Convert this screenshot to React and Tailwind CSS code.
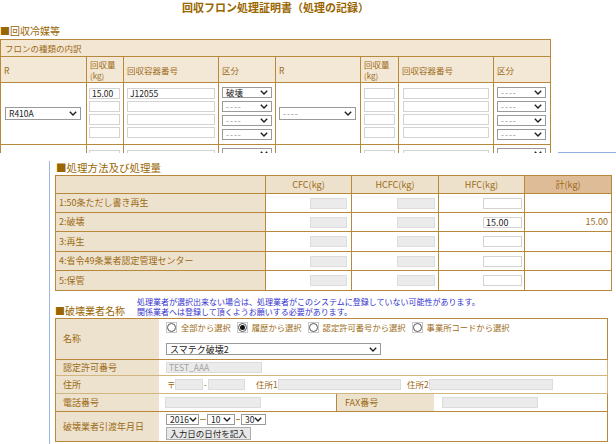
import clsx from 'clsx'

// 回収フロン処理証明書 — top of the record page with the "processing" panel laid over it

function Chevron() {
  return (
    <svg width="8" height="5" viewBox="0 0 8 5" className="shrink-0">
      <path d="M0.8 0.8 L4 4 L7.2 0.8" fill="none" stroke="#1f1f1f" strokeWidth="1.4" />
    </svg>
  )
}

function Sel({ value, muted, className }) {
  return (
    <div
      className={clsx(
        'flex items-center justify-between border border-[#9a9a9a] bg-white pl-[3px] pr-[3px] leading-none',
        className,
      )}
    >
      <span className={muted ? 'tracking-[1px] text-[#8a8a8a]' : 'text-[#222]'}>{value}</span>
      <Chevron />
    </div>
  )
}

function Box({ value, disabled, className }) {
  return (
    <div
      className={clsx(
        'flex items-center border px-[2px] leading-none',
        disabled ? 'bg-[#ebebeb] border-[#dcdcdc] text-[#a0a0a0]' : 'bg-white border-[#d3d3d3] text-[#222]',
        className,
      )}
    >
      {value}
    </div>
  )
}

function Radio({ checked, label }) {
  return (
    <div className="flex items-center gap-[4px]">
      <span className="flex h-[11px] w-[11px] items-center justify-center border border-[#c8c8c8] bg-white">
        <span className="flex h-[9px] w-[9px] items-center justify-center rounded-full border border-[#555] bg-white">
          {checked && <span className="block h-[5px] w-[5px] rounded-full bg-[#111]" />}
        </span>
      </span>
      <span>{label}</span>
    </div>
  )
}

const cellB = 'border-r border-b border-[#b8893b]'

function DataRow({ first }) {
  // one 8-column data row of the recovered-refrigerant table
  const qty = (w, pl, vals) => (
    <div className={clsx(cellB, 'flex flex-col gap-[2px] pt-[5px]', pl)}>
      {vals.map((v, i) => (
        <Box key={i} value={v} className={clsx('h-[11px]', w)} />
      ))}
    </div>
  )
  const kbn = (w, vals) => (
    <div className={clsx(cellB, 'flex flex-col gap-[3px] pl-[3px]', first ? 'pt-[4px]' : 'pt-[3px]')}>
      {vals.map((v, i) => (
        <Sel key={i} value={v} muted={v === '----'} className={clsx('h-[11px]', w)} />
      ))}
    </div>
  )
  return (
    <>
      <div className={clsx(cellB, 'flex items-center pl-[4px]')}>
        <Sel value={first ? 'R410A' : '-----'} muted={!first} className="h-[13px] w-[76px]" />
      </div>
      {qty('w-[31px]', 'pl-[2px]', first ? ['15.00', '', '', ''] : ['', '', '', ''])}
      {qty('w-[88px]', 'pl-[3px]', first ? ['J12055', '', '', ''] : ['', '', '', ''])}
      {kbn('w-[50px]', first ? ['破壊', '----', '----', '----'] : ['----', '----', '----', '----'])}
      <div className={clsx(cellB, 'flex items-center pl-[3px]')}>
        <Sel value="----" muted className="h-[13px] w-[77px]" />
      </div>
      {qty('w-[31px]', 'pl-[3px]', ['', '', '', ''])}
      {qty('w-[86px]', 'pl-[4px]', ['', '', '', ''])}
      {kbn('w-[49px]', ['----', '----', '----', '----'])}
    </>
  )
}

const METHODS = [
  { label: '1:50条ただし書き再生', h: 'h-[19px]' },
  { label: '2:破壊', h: 'h-[19px]', hfc: '15.00', total: '15.00' },
  { label: '3:再生', h: 'h-[20px]' },
  { label: '4:省令49条業者認定管理センター', h: 'h-[19px]' },
  { label: '5:保管', h: 'h-[20px]' },
]

export default function App() {
  return (
    <div className="relative h-[444px] w-[616px] overflow-hidden bg-white font-['Noto_Sans_CJK_JP','Noto_Sans',sans-serif] text-[#9c6a15]">
      {/* background page */}
      <div className="h-[153px] overflow-hidden">
        <div className="h-[14px] w-[551px] text-center text-[11px] font-bold leading-[14px] text-[#996600]">
          回収フロン処理証明書（処理の記録）
        </div>
        <div className="mt-[10px] h-[13px] text-[10px] leading-[13px] text-[#996600]">■回収冷媒等</div>
        <div className="mt-[2px] grid w-[551px] grid-cols-[86px_37px_95px_57px_85px_38px_95px_57px] grid-rows-[17px_26px_62px_70px] border-l border-t border-[#b8893b] text-[8.5px] leading-[10px]">
          <div className={clsx(cellB, 'col-span-8 flex items-center bg-[#f3e7d3] pl-[4px]')}>フロンの種類の内訳</div>
          {['R', '回収量', '回収容器番号', '区分', 'R', '回収量', '回収容器番号', '区分'].map((h, i) => (
            <div key={i} className={clsx(cellB, 'flex items-center bg-[#f3e8d6] pl-[3px]')}>
              {h === '回収量' ? (
                <span className="leading-[11px]">
                  回収量
                  <br />
                  <span className="text-[8px]">(kg)</span>
                </span>
              ) : (
                h
              )}
            </div>
          ))}
          <DataRow first />
          <DataRow />
        </div>
      </div>

      {/* overlaid panel */}
      <div className="ml-[49px] h-[291px] border-l border-[#9db7e2] pl-[5px]">
        <div className="mt-[8px] h-[13px] pl-[1px] text-[10.5px] leading-[13px] text-[#996600]">■処理方法及び処理量</div>
        <div className="mt-[1px] grid w-[557px] grid-cols-[210px_86px_87px_86px_87px] border-l border-t border-[#b8893b] text-[9px]">
          <div className={clsx(cellB, 'h-[18px] bg-[#ede1cb]')} />
          {['CFC(kg)', 'HCFC(kg)', 'HFC(kg)'].map((h) => (
            <div key={h} className={clsx(cellB, 'flex h-[18px] items-center justify-center bg-[#ede1cb]')}>
              {h}
            </div>
          ))}
          <div className={clsx(cellB, 'flex h-[18px] items-center justify-center bg-[#dfbc98]')}>計(kg)</div>
          {METHODS.map((m) => (
            <div key={m.label} className="contents">
              <div className={clsx(cellB, m.h, 'flex items-center bg-[#ede2cd] pl-[3px]')}>{m.label}</div>
              <div className={clsx(cellB, 'flex items-center justify-end pr-[4px]')}>
                <Box disabled className="h-[11px] w-[37px]" />
              </div>
              <div className={clsx(cellB, 'flex items-center justify-end pr-[3px]')}>
                <Box disabled className="h-[11px] w-[38px]" />
              </div>
              <div className={clsx(cellB, 'flex items-center justify-end pr-[2px]')}>
                <Box value={m.hfc} className="h-[11px] w-[39px] text-[9px]" />
              </div>
              <div className={clsx(cellB, 'flex items-center justify-end pr-[3px]')}>{m.total}</div>
            </div>
          ))}
        </div>

        <div className="mt-[6px] flex items-end">
          <div className="w-[82px] text-[10px] leading-[12px] text-[#996600]">■破壊業者名称</div>
          <div className="text-[8px] leading-[10px] text-[#3333cc]">
            処理業者が選択出来ない場合は、処理業者がこのシステムに登録していない可能性があります。
            <br />
            関係業者へは登録して頂くようお願いする必要があります。
          </div>
        </div>

        <div className="mt-[1px] w-[553px] border-l border-t border-[#b8893b] text-[9px]">
          <div className="flex h-[41px] border-b border-r border-[#b8893b]">
            <div className="flex w-[103px] items-center bg-[#ede2cd] pl-[7px]">名称</div>
            <div className="flex flex-col gap-[10px] pl-[7px] pt-[3px] text-[8.3px]">
              <div className="flex h-[11px] items-center gap-[6px]">
                <Radio label="全部から選択" />
                <Radio checked label="履歴から選択" />
                <Radio label="認定許可番号から選択" />
                <Radio label="事業所コードから選択" />
              </div>
              <Sel value="スマテク破壊2" className="h-[12px] w-[215px] text-[9px]" />
            </div>
          </div>
          <div className="flex h-[16px] border-b border-r border-[#d2b67e]">
            <div className="flex w-[103px] items-center bg-[#ede2cd] pl-[7px]">認定許可番号</div>
            <div className="flex items-center pl-[7px]">
              <Box disabled value="TEST_AAA" className="h-[11px] w-[96px] text-[8.5px]" />
            </div>
          </div>
          <div className="flex h-[18px] border-b border-r border-[#d2b67e]">
            <div className="flex w-[103px] items-center bg-[#ede2cd] pl-[7px]">住所</div>
            <div className="flex items-center pl-[8px] text-[8.5px]">
              <span className="w-[8px]">〒</span>
              <Box disabled className="h-[11px] w-[28px]" />
              <span className="w-[5px] text-center">-</span>
              <Box disabled className="h-[11px] w-[37px]" />
              <span className="ml-[11px] w-[22px]">住所1</span>
              <Box disabled className="h-[11px] w-[123px]" />
              <span className="ml-[6px] w-[22px]">住所2</span>
              <Box disabled className="h-[11px] w-[124px]" />
            </div>
          </div>
          <div className="flex h-[18px] border-b border-r border-[#b8893b]">
            <div className="flex w-[103px] items-center bg-[#ede2cd] pl-[7px]">電話番号</div>
            <div className="flex w-[178px] items-center border-r border-[#b8893b] pl-[6px]">
              <Box disabled className="h-[11px] w-[96px]" />
            </div>
            <div className="flex w-[97px] items-center bg-[#ede2cd] pl-[8px]">FAX番号</div>
            <div className="flex items-center pl-[8px]">
              <Box disabled className="h-[11px] w-[96px]" />
            </div>
          </div>
          <div className="flex h-[30px] border-b border-r border-[#b8893b]">
            <div className="flex w-[103px] items-center bg-[#ede2cd] pl-[7px]">破壊業者引渡年月日</div>
            <div className="flex flex-col gap-[2px] pl-[7px] pt-[2px]">
              <div className="flex h-[11px] items-center">
                <Sel value="2016" className="h-[11px] w-[33px] text-[8.5px]" />
                <span className="mx-[1px] w-[6px] border-t border-[#b8893b]" />
                <Sel value="10" className="h-[11px] w-[28px] text-[8.5px]" />
                <span className="mx-[1px] w-[4px] border-t border-[#b8893b]" />
                <Sel value="30" className="h-[11px] w-[25px] text-[8.5px]" />
              </div>
              <div className="flex h-[13px] w-[85px] items-center justify-center border border-[#adadad] bg-[#e8e8e8] text-[8.5px] text-[#222]">
                入力日の日付を記入
              </div>
            </div>
          </div>
        </div>
      </div>

      <div className="absolute left-[558px] top-[152px] h-px w-[58px] bg-[#8fb0e0]" />
    </div>
  )
}
